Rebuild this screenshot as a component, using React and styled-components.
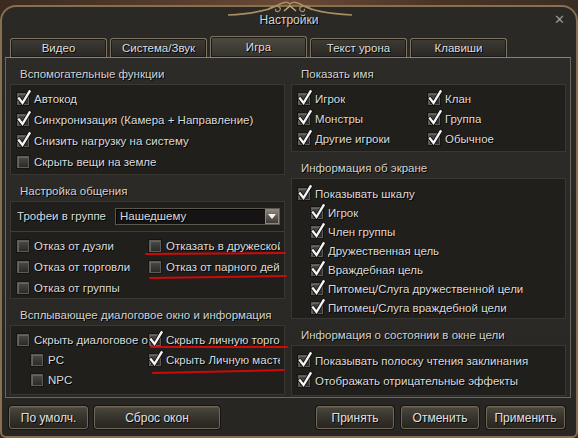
import React from 'react';
import styled, { createGlobalStyle } from 'styled-components';

const GlobalStyle = createGlobalStyle`
  html, body {
    margin: 0;
    padding: 0;
  }
  body {
    width: 578px;
    height: 438px;
    overflow: hidden;
    background: linear-gradient(90deg, #3a2a21 0%, #5b3f2f 35%, #6a4a36 50%, #4b3426 75%, #3b2d24 100%);
    font-family: "Liberation Sans", Arial, sans-serif;
    font-size: 11.5px;
    color: #d8d8d8;
  }
`;

const Window = styled.div`
  box-sizing: border-box;
  position: relative;
  margin-top: 5px;
  width: 578px;
  height: 433px;
  border: 2px solid #86704e;
  border-radius: 16px 16px 6px 6px;
  background: linear-gradient(180deg, #2b2926 0%, #2a2824 60%, #282622 100%);
  display: flex;
  flex-direction: column;
`;

const Ornament = styled.svg`
  position: absolute;
  top: -7px;
  left: 226px;
`;

const TitleBar = styled.div`
  height: 29px;
  display: grid;
  grid-template-columns: 1fr auto 1fr;
  align-items: start;
  padding-top: 6px;
  box-sizing: border-box;
`;

const Title = styled.div`
  grid-column: 2;
  line-height: 14px;
  font-size: 12px;
  color: #d4d4d4;
  text-shadow: 1px 1px 0 #000;
`;

const Close = styled.div`
  justify-self: end;
  margin-right: 11px;
  line-height: 14px;
  font-size: 13px;
  color: #9a9a96;
`;

const TabRow = styled.div`
  height: 21px;
  display: flex;
  align-items: flex-end;
  gap: 3px;
  padding-left: 8px;
`;

const Tab = styled.div`
  box-sizing: border-box;
  width: 97px;
  height: ${(p) => (p.$active ? 21 : 19)}px;
  border: 1px solid #7b7464;
  border-bottom: none;
  border-radius: 3px 3px 0 0;
  background: ${(p) =>
    p.$active
      ? 'linear-gradient(180deg, #4d4a42 0%, #36332d 100%)'
      : 'linear-gradient(180deg, #3e3b35 0%, #2a2824 100%)'};
  box-shadow: inset 0 0 0 1px #1b1a17;
  display: flex;
  align-items: center;
  justify-content: center;
  color: #dcdcdc;
  text-shadow: 1px 1px 0 #000;
`;

const Panel = styled.div`
  box-sizing: border-box;
  height: 341px;
  margin: 0 5px 0 3px;
  border: 1px solid #6d675a;
  border-top-color: #8a8270;
  background: linear-gradient(180deg, #2d2b27 0%, #2a2824 100%);
  padding: 0 4px;
  display: grid;
  grid-template-columns: 275px 275px;
  column-gap: 6px;
`;

const Column = styled.div`
  display: flex;
  flex-direction: column;
`;

const Header = styled.div`
  height: 26px;
  box-sizing: border-box;
  display: flex;
  align-items: flex-end;
  padding: 0 0 3px 10px;
  line-height: 14px;
  color: #d2d2d2;
  text-shadow: 1px 1px 0 #000;
`;

const Box = styled.div`
  background: #201f1c;
  border: 1px solid #393731;
  padding: ${(p) => p.$pad || '4px 4px 2px 6px'};
`;

const Row = styled.div`
  height: ${(p) => p.$h || 21}px;
  display: flex;
  align-items: center;
  padding-left: ${(p) => p.$indent || 0}px;
`;

const Grid = styled.div`
  display: grid;
  grid-template-columns: ${(p) => p.$col}px minmax(0, 1fr);
`;

const Cell = styled.div`
  position: relative;
  min-width: 0;
  height: ${(p) => p.$h || 21}px;
  display: flex;
  align-items: center;
  padding-left: ${(p) => p.$indent || 0}px;
`;

const CheckBox = styled.span`
  position: relative;
  flex: none;
  box-sizing: border-box;
  width: 12px;
  height: 12px;
  border: 1px solid #5d5b56;
  background: linear-gradient(180deg, #4a4946 0%, #2c2b29 100%);
  box-shadow: inset 1px 1px 0 #66645e, 0 0 0 1px #151412;
  margin-right: 5px;
`;

const Mark = styled.svg`
  position: absolute;
  left: -1px;
  top: -4px;
  overflow: visible;
`;

const Label = styled.span`
  white-space: nowrap;
  overflow: hidden;
  line-height: 14px;
  color: #dadada;
  text-shadow: 1px 1px 0 #000;
`;

const RedMark = styled.span`
  position: absolute;
  left: ${(p) => p.$left}px;
  top: ${(p) => p.$top}px;
  width: ${(p) => p.$w}px;
  height: 2px;
  background: #cc0a0a;
  border-radius: 1px;
  transform: rotate(${(p) => p.$rot}deg);
  transform-origin: left center;
`;

const DropRow = styled.div`
  display: grid;
  grid-template-columns: 98px 165px;
  align-items: center;
  height: 18px;
  margin-bottom: 6px;
`;

const Select = styled.div`
  box-sizing: border-box;
  height: 17px;
  border: 1px solid #5c584e;
  background: #151412;
  box-shadow: inset 1px 1px 0 #000;
  display: flex;
  align-items: center;
  padding-left: 4px;
`;

const SelectText = styled.span`
  flex: 1;
  line-height: 14px;
  color: #dadada;
  text-shadow: 1px 1px 0 #000;
`;

const Arrow = styled.span`
  box-sizing: border-box;
  width: 14px;
  height: 15px;
  border: 1px solid #8c877b;
  background: linear-gradient(180deg, #8a867c 0%, #5c584f 55%, #3f3c35 100%);
  display: flex;
  align-items: center;
  justify-content: center;
`;

const Separator = styled.div`
  height: 1px;
  margin: 0 -4px 3px -7px;
  background: #3f3d37;
`;

const BottomBar = styled.div`
  flex: 1;
  display: flex;
  padding: 8px 11px 0 7px;
  gap: 6px;
`;

const Spacer = styled.div`
  flex: 1;
`;

const Button = styled.button`
  box-sizing: border-box;
  width: ${(p) => p.$w}px;
  height: 23px;
  margin-left: ${(p) => p.$ml || 0}px;
  border: 1px solid #6f6757;
  border-radius: 3px;
  background: linear-gradient(180deg, #4b473d 0%, #37342d 50%, #27241f 100%);
  box-shadow: 0 0 0 1px #161410, inset 0 1px 0 rgba(255, 255, 255, 0.08);
  font-family: "Liberation Sans", Arial, sans-serif;
  font-size: 12px;
  color: #e0e0e0;
  text-shadow: 1px 1px 0 #000;
  padding: 0;
`;

const Check = ({ on }) => (
  <CheckBox>
    {on && (
      <Mark width="14" height="15" viewBox="0 0 14 15">
        <path d="M2 8.5 L5.5 13 L12.5 1.5" fill="none" stroke="#111" strokeWidth="4" strokeLinecap="square" />
        <path d="M2 8.5 L5.5 13 L12.5 1.5" fill="none" stroke="#f4f4f4" strokeWidth="2.4" strokeLinecap="square" />
      </Mark>
    )}
  </CheckBox>
);

const Item = ({ on, children, h, indent }) => (
  <Row $h={h} $indent={indent}>
    <Check on={on} />
    <Label>{children}</Label>
  </Row>
);

const Pair = ({ col, h, items }) => (
  <Grid $col={col}>
    {items.map((it, i) => (
      <Cell key={i} $h={h} $indent={it.indent}>
        <Check on={it.on} />
        <Label>{it.text}</Label>
        {it.mark && <RedMark $left={it.mark[0]} $top={it.mark[1]} $w={it.mark[2]} $rot={it.mark[3]} />}
      </Cell>
    ))}
  </Grid>
);

export default function App() {
  return (
    <>
      <GlobalStyle />
      <Window>
        <Ornament width="124" height="16" viewBox="0 0 124 16">
          <path d="M0 15 C 20 14, 38 12, 50 5 C 55 2, 59 1, 62 4 C 65 1, 69 2, 74 5 C 86 12, 104 14, 124 15" fill="none" stroke="#a88f63" strokeWidth="1.6" />
          <path d="M40 10 C 46 4, 54 6, 52 10 C 50 13, 46 11, 48 9" fill="none" stroke="#a88f63" strokeWidth="1.3" />
          <path d="M84 10 C 78 4, 70 6, 72 10 C 74 13, 78 11, 76 9" fill="none" stroke="#a88f63" strokeWidth="1.3" />
          <path d="M56 11 L62 6 L68 11" fill="none" stroke="#c2a877" strokeWidth="1.4" />
        </Ornament>
        <TitleBar>
          <Title>Настройки</Title>
          <Close>✕</Close>
        </TitleBar>
        <TabRow>
          <Tab>Видео</Tab>
          <Tab>Система/Звук</Tab>
          <Tab $active>Игра</Tab>
          <Tab>Текст урона</Tab>
          <Tab>Клавиши</Tab>
        </TabRow>
        <Panel>
          <Column>
            <Header>Вспомогательные функции</Header>
            <Box $pad="3px 4px 2px 6px">
              <Item on>Автокод</Item>
              <Item on>Синхронизация (Камера + Направление)</Item>
              <Item on>Снизить нагрузку на систему</Item>
              <Item>Скрыть вещи на земле</Item>
            </Box>

            <Header>Настройка общения</Header>
            <Box $pad="5px 4px 0 6px">
              <DropRow>
                <Label>Трофеи в группе</Label>
                <Select>
                  <SelectText>Нашедшему</SelectText>
                  <Arrow>
                    <svg width="8" height="5" viewBox="0 0 8 5">
                      <path d="M0 0 H8 L4 5 Z" fill="#f2f2f2" />
                    </svg>
                  </Arrow>
                </Select>
              </DropRow>
              <Separator />
              <Pair
                col={132}
                items={[
                  { text: 'Отказ от дуэли' },
                  { text: 'Отказать в дружеской', mark: [-4, 18, 141, -0.4] },
                  { text: 'Отказ от торговли' },
                  { text: 'Отказ от парного действия', mark: [0, 21, 138, -0.8] },
                  { text: 'Отказ от группы' },
                ]}
              />
            </Box>

            <Header>Всплывающее диалоговое окно и информация</Header>
            <Box $pad="4px 4px 4px 6px">
              <Pair
                col={132}
                h={20}
                items={[
                  { text: 'Скрыть диалоговое окно' },
                  { text: 'Скрыть личную торговлю', on: true, mark: [1, 16, 138, 0] },
                  { text: 'PC', indent: 14 },
                  { text: 'Скрыть Личную мастерскую', on: true, mark: [3, 22, 133, -1.3] },
                  { text: 'NPC', indent: 14 },
                ]}
              />
            </Box>
          </Column>

          <Column>
            <Header>Показать имя</Header>
            <Box $pad="4px 4px 2px 6px">
              <Pair
                col={130}
                h={20}
                items={[
                  { text: 'Игрок', on: true },
                  { text: 'Клан', on: true },
                  { text: 'Монстры', on: true },
                  { text: 'Группа', on: true },
                  { text: 'Другие игроки', on: true },
                  { text: 'Обычное', on: true },
                ]}
              />
            </Box>

            <Header>Информация об экране</Header>
            <Box $pad="5px 4px 1px 6px">
              <Item on h={19}>Показывать шкалу</Item>
              <Item on h={19} indent={13}>Игрок</Item>
              <Item on h={19} indent={13}>Член группы</Item>
              <Item on h={19} indent={13}>Дружественная цель</Item>
              <Item on h={19} indent={13}>Враждебная цель</Item>
              <Item on h={19} indent={13}>Питомец/Слуга дружественной цели</Item>
              <Item on h={19} indent={13}>Питомец/Слуга враждебной цели</Item>
            </Box>

            <Header>Информация о состоянии в окне цели</Header>
            <Box $pad="5px 4px 4px 6px">
              <Item on h={20}>Показывать полоску чтения заклинания</Item>
              <Item on h={20}>Отображать отрицательные эффекты</Item>
            </Box>
          </Column>
        </Panel>
        <BottomBar>
          <Button $w={79}>По умолч.</Button>
          <Button $w={126}>Сброс окон</Button>
          <Spacer />
          <Button $w={78}>Принять</Button>
          <Button $w={78} $ml={1}>Отменить</Button>
          <Button $w={79} $ml={1}>Применить</Button>
        </BottomBar>
      </Window>
    </>
  );
}
